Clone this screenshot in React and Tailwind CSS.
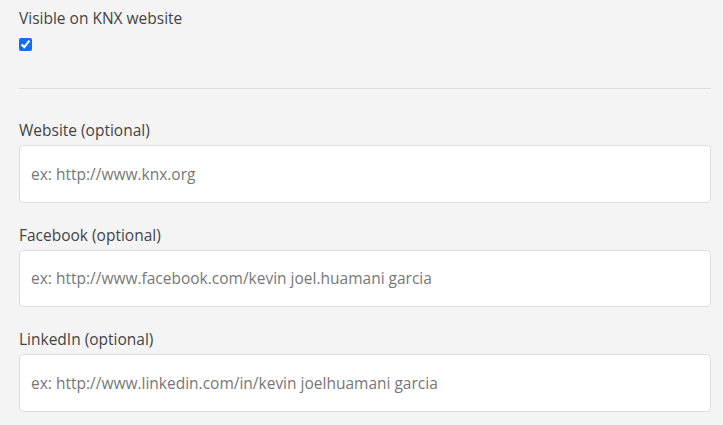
const fields = [
  { label: "Website (optional)", placeholder: "ex: http://www.knx.org" },
  { label: "Facebook (optional)", placeholder: "ex: http://www.facebook.com/kevin joel.huamani garcia" },
  { label: "LinkedIn (optional)", placeholder: "ex: http://www.linkedin.com/in/kevin joelhuamani garcia" },
];

const App = () => {
  return (
    <div className="min-h-[425px] bg-[#f4f4f4] pl-[19px] pr-[12px] pt-[8px] font-['Open_Sans',sans-serif] text-[15.5px] text-[#444]">
      <label className="block leading-[21px]">Visible on KNX website</label>
      <input type="checkbox" defaultChecked className="mt-[9px] block h-[13px] w-[13px] accent-[#0d6efd]" />
      <hr className="mt-[37px] border-t border-[#dcdcdc]" />
      <div className="mt-[31px] space-y-[22px]">
        {fields.map((f) => (
          <div key={f.label}>
            <label className="block leading-[21px]">{f.label}</label>
            <input
              type="text"
              placeholder={f.placeholder}
              className="mt-[4px] block h-[57.5px] w-full rounded-[4px] border border-[#dedede] bg-white px-[11px] text-[15.5px] placeholder:text-[#777] outline-none"
            />
          </div>
        ))}
      </div>
    </div>
  );
};

export default App;
